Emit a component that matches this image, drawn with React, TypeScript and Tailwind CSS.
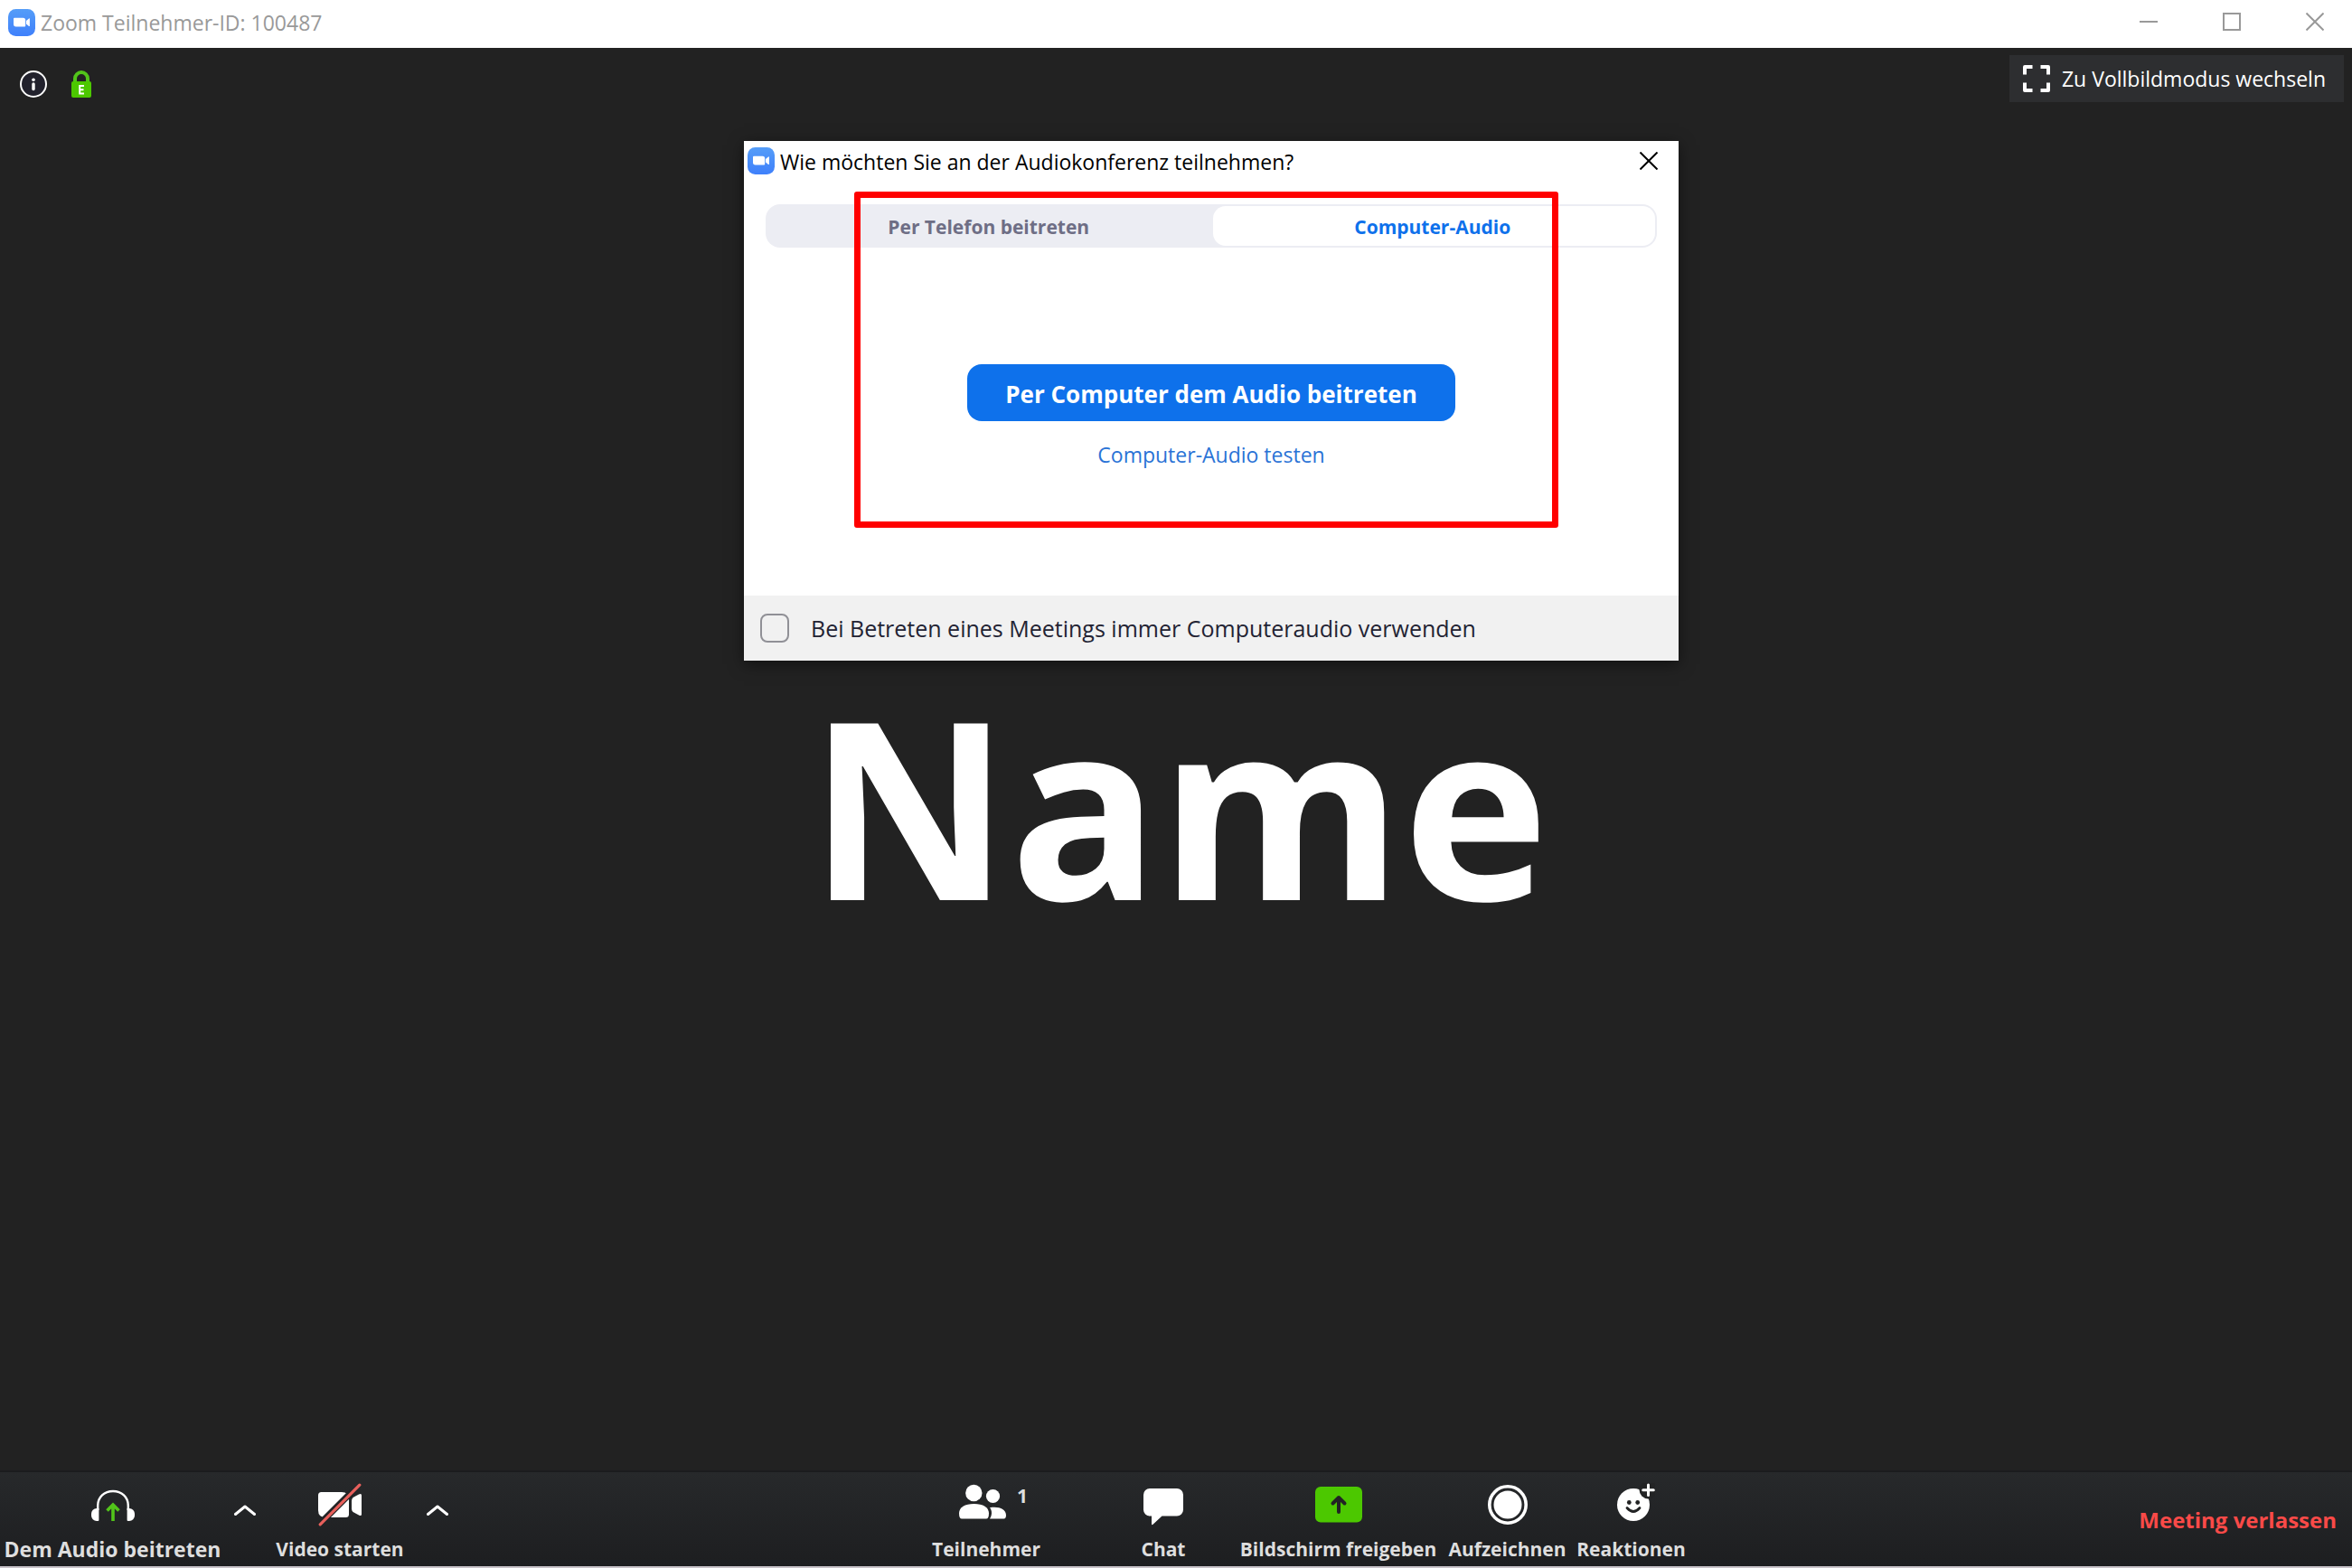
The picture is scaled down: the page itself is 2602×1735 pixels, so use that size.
import React, { useState } from "react";

function ZoomLogo() {
  return (
    <svg viewBox="0 0 30 30" className="size-[30px] shrink-0" aria-hidden="true">
      <defs>
        <linearGradient id="logo" x1="0" y1="0" x2="0" y2="1">
          <stop offset="0" stopColor="#559df8" />
          <stop offset="1" stopColor="#3f80fb" />
        </linearGradient>
      </defs>
      <rect width="30" height="30" rx="8.5" fill="url(#logo)" />
      <path d="M6 10.8q0-1 1-1h9.600q2.600 0 2.600 2.600v6q0 1-1 1H8.600q-2.600 0-2.600-2.600zM20 13l3-2.500q.900-.500.900.400v7.600q0 .900-.900.400l-3-2.500z" fill="#fff" />
    </svg>
  );
}

function InfoIcon() {
  return (
    <svg viewBox="0 0 30 30" className="size-[30px]" aria-hidden="true">
      <circle cx="15" cy="15" r="14" fill="#22222d" stroke="#fff" strokeWidth="2" />
      <circle cx="15" cy="10.200" r="1.800" fill="#fff" />
      <path d="M15 15v5.500" stroke="#fff" strokeWidth="3.400" strokeLinecap="round" />
    </svg>
  );
}

function LockIcon() {
  return (
    <svg viewBox="0 0 22 30" className="h-[30px] w-[22px]" aria-hidden="true">
      <path d="M4 13V9a7 7 0 0 1 14 0v4" fill="none" stroke="#52c41a" strokeWidth="4" />
      <rect y="12" width="22" height="18" rx="2" fill="#4cc800" />
      <path d="M14 17H9.200v8.500H14M9.200 21.200h4.300" fill="none" stroke="#fff" strokeWidth="2" />
    </svg>
  );
}

function FullscreenIcon() {
  return (
    <svg viewBox="0 0 30 30" className="size-[30px]" fill="none" stroke="#fff" strokeWidth="4" strokeLinejoin="round" aria-hidden="true">
      <path d="M2 10.500V2h8.500M19.500 2H28v8.500M28 19.500V28h-8.500M10.500 28H2v-8.500" />
    </svg>
  );
}

function Chevron() {
  return (
    <svg viewBox="0 0 24 12" className="h-3 w-6" fill="none" stroke="#fff" strokeWidth="3" strokeLinecap="round" strokeLinejoin="round" aria-hidden="true">
      <path d="M1.500 10.500L12 2l10.500 8.500" />
    </svg>
  );
}

function HeadphonesIcon() {
  return (
    <svg viewBox="0 0 48 48" className="size-12" aria-hidden="true">
      <path d="M7.200 30V25C7.200 15.500 14.500 9 24 9s16.800 6.500 16.800 16v5" fill="none" stroke="#fff" strokeWidth="2.400" />
      <path d="M8.400 28H6a6 6 0 0 0-6 6v2a6 6 0 0 0 6 6h1.400q1 0 1-1zM39.600 28H42a6 6 0 0 1 6 6v2a6 6 0 0 1-6 6h-1.400q-1 0-1-1z" fill="#fff" />
      <path d="M24 42V24M17.500 30.500L24 24l6.500 6.500" fill="none" stroke="#52c41a" strokeWidth="3.600" />
    </svg>
  );
}

function VideoOffIcon() {
  return (
    <svg viewBox="0 0 48 48" className="size-12" aria-hidden="true">
      <path d="M0 13.500Q0 10 3.500 10H26q8 0 8 8v16.500q0 3.500-3.500 3.500H8q-8 0-8-8z" fill="#fff" />
      <path d="M37 19.500Q37 17.500 38.500 16l6.500-3.600q3-1.400 3 1v21.200q0 2.400-3 1L38.500 32Q37 30.500 37 28.500z" fill="#fff" />
      <path d="M-1 48L37 10" stroke="#222324" strokeWidth="7" />
      <path d="M2.200 45.800L45.800 2.200" stroke="#e8605c" strokeWidth="3.200" strokeLinecap="round" />
    </svg>
  );
}

function PeopleIcon() {
  return (
    <svg viewBox="0 0 60 48" className="h-12 w-[60px]" fill="#fff" aria-hidden="true">
      <circle cx="16.300" cy="11" r="9.200" />
      <circle cx="37.500" cy="14.500" r="7.600" />
      <path d="M0 33.500C0 27 6.500 23 16.500 23S33 27 33 33.500c0 4-1 6-3 6H3c-2 0-3-2-3-6z" />
      <path d="M34 27.200C43.500 25.500 52 28.500 52 35.500c0 2.500-.800 4-2.500 4H34c2.600-4 2.800-9 0-12.300z" />
    </svg>
  );
}

function ChatIcon() {
  return (
    <svg viewBox="0 0 44 48" className="h-12 w-11" fill="#fff" aria-hidden="true">
      <path d="M7 6h30a7 7 0 0 1 7 7v16.500a7 7 0 0 1-7 7H20.500L10.500 45.800q-1.500 1.200-1.500-.800V36.500H7a7 7 0 0 1-7-7V13a7 7 0 0 1 7-7z" />
    </svg>
  );
}

function ShareIcon() {
  return (
    <svg viewBox="0 0 52 48" className="h-12 w-[52px]" aria-hidden="true">
      <rect y="4" width="52" height="39.500" rx="6" fill="#4cc800" />
      <path d="M26 32V16M19.500 22.500L26 16l6.500 6.500" fill="none" stroke="#222324" strokeWidth="4" strokeLinecap="round" strokeLinejoin="round" />
    </svg>
  );
}

function RecordIcon() {
  return (
    <svg viewBox="0 0 44 48" className="h-12 w-11" aria-hidden="true">
      <circle cx="22" cy="24" r="20.200" fill="none" stroke="#fff" strokeWidth="3.600" />
      <circle cx="22" cy="24" r="15.500" fill="#fff" />
    </svg>
  );
}

function ReactionIcon() {
  return (
    <svg viewBox="-10 0 52 48" className="h-12 w-[52px]" aria-hidden="true">
      <circle cx="18" cy="24" r="18" fill="#fff" />
      <circle cx="34.500" cy="7.500" r="10" fill="#232425" />
      <path d="M34.500 2v11.500M28.700 7.700h11.600" stroke="#fff" strokeWidth="3" strokeLinecap="round" />
      <circle cx="13.300" cy="21.500" r="2.400" fill="#222324" />
      <circle cx="22.700" cy="21.500" r="2.400" fill="#222324" />
      <path d="M11 27.500q7 8 14 0" fill="none" stroke="#222324" strokeWidth="2.800" strokeLinecap="round" />
    </svg>
  );
}

function CloseIcon() {
  return (
    <svg viewBox="0 0 20 20" className="size-5" fill="none" stroke="currentColor" strokeWidth="2" aria-hidden="true">
      <path d="M.500.500l19 19M19.500.500l-19 19" />
    </svg>
  );
}

function ToolButton({ label, width, large, badge, children }: {
  label: string;
  width: string;
  large?: boolean;
  badge?: string;
  children: React.ReactNode;
}) {
  return (
    <button type="button" className={`flex flex-col items-center gap-[13px] whitespace-nowrap font-bold text-[#dedede] ${width}`}>
      <span className="relative flex">
        {children}
        {badge && <span className="absolute top-0 left-[64px] text-[21px] leading-7">{badge}</span>}
      </span>
      <span className={large ? "text-[23px] leading-6" : "text-[21px] leading-6"}>{label}</span>
    </button>
  );
}

function TitleBar() {
  return (
    <header className="flex h-[53px] shrink-0 items-center justify-between bg-white text-[#999]">
      <div className="flex items-center gap-[6px] pb-1 pl-[9px]">
        <ZoomLogo />
        <h1 className="text-[23px] leading-8">Zoom Teilnehmer-ID: 100487</h1>
      </div>
      <div className="flex gap-[72px] pr-[31px] pb-[5px]">
        <button type="button" aria-label="Minimieren" className="flex size-5 items-center">
          <span className="h-[2px] w-5 bg-[#999]" />
        </button>
        <button type="button" aria-label="Maximieren" className="size-5 border-2 border-[#999]" />
        <button type="button" aria-label="Schließen" className="size-5"><CloseIcon /></button>
      </div>
    </header>
  );
}

function AudioDialog() {
  const [tab, setTab] = useState("computer");
  const tabs = [
    { id: "phone", label: "Per Telefon beitreten" },
    { id: "computer", label: "Computer-Audio" },
  ];
  return (
    <section role="dialog" aria-labelledby="dialog-title" className="absolute top-[103px] left-[calc(50%-478px)] w-[1034px] bg-white shadow-[0_4px_16px_rgba(0,0,0,0.5)]">
      <div className="flex h-11 items-center pr-[23px] pl-1">
        <ZoomLogo />
        <h2 id="dialog-title" className="ml-[6px] flex-1 pt-[2px] text-[23px] leading-8 text-black">Wie möchten Sie an der Audiokonferenz teilnehmen?</h2>
        <button type="button" aria-label="Schließen" className="text-black"><CloseIcon /></button>
      </div>
      <div role="tablist" className="mx-6 mt-[26px] grid h-12 grid-cols-[101fr_100fr] rounded-[16px] bg-[#ecedf3] p-[2px]">
        {tabs.map((t) => (
          <button
            key={t.id}
            type="button"
            role="tab"
            aria-selected={tab === t.id}
            onClick={() => setTab(t.id)}
            className={`rounded-[14px] pt-[2px] pr-1 text-[21px] leading-7 font-bold ${tab === t.id ? "bg-white text-[#0e71eb]" : "text-[#6e6e85]"}`}
          >
            {t.label}
          </button>
        ))}
      </div>
      <div className="flex flex-col items-center gap-[21px] pt-[129px] pb-[140px]">
        <button type="button" className="h-[63px] rounded-[16px] bg-[#0e71eb] px-[42px] pt-[2px] text-[26px] leading-8 font-bold whitespace-nowrap text-white">
          Per Computer dem Audio beitreten
        </button>
        <a href="#test" className="text-[23px] leading-8 text-[#2a73d6]">Computer-Audio testen</a>
      </div>
      <label className="flex h-[72px] items-center gap-6 bg-[#f1f1f1] pl-[18px] text-[25px] leading-8 text-[#232333]">
        <input type="checkbox" className="size-8 appearance-none rounded-[8px] border-2 border-[#909096] checked:bg-[#0e71eb]" />
        Bei Betreten eines Meetings immer Computeraudio verwenden
      </label>
      <div className="pointer-events-none absolute top-14 left-[122px] h-[372px] w-[779px] rounded-[3px] border-[7px] border-[#f00]" />
    </section>
  );
}

export default function App() {
  return (
    <div className="flex min-h-screen flex-col bg-[#222] font-['Open_Sans','Noto_Sans',sans-serif]">
      <TitleBar />
      <main className="relative flex flex-1 flex-col">
        <div className="flex items-start justify-between pt-2 pr-[9px] pl-[22px]">
          <div className="flex gap-[27px] pt-[17px]">
            <button type="button" aria-label="Informationen"><InfoIcon /></button>
            <button type="button" aria-label="Verschlüsselung"><LockIcon /></button>
          </div>
          <button type="button" className="flex h-[52px] items-center gap-[13px] bg-[#2d2e30] pr-5 pl-[15px] text-[23px] leading-8 text-white">
            <FullscreenIcon />
            Zu Vollbildmodus wechseln
          </button>
        </div>
        <div className="flex flex-1 items-center justify-center pt-10 pl-[6px]">
          <p className="text-[274px] leading-none font-bold text-white">Name</p>
        </div>
        <AudioDialog />
      </main>
      <footer className="flex items-stretch justify-between border-t-2 border-b-2 border-t-[#1b1c1e] border-b-[#c9c3c9] bg-linear-to-b from-[#27292b] to-[#1d1e20] pt-3 pb-[7px]">
        <div className="flex">
          <ToolButton label="Dem Audio beitreten" width="w-[249px]" large><HeadphonesIcon /></ToolButton>
          <button type="button" aria-label="Audiooptionen" className="flex w-11 justify-center pt-6"><Chevron /></button>
          <ToolButton label="Video starten" width="w-[166px]"><VideoOffIcon /></ToolButton>
          <button type="button" aria-label="Videooptionen" className="flex w-[49px] justify-center pt-6"><Chevron /></button>
        </div>
        <div className="flex">
          <ToolButton label="Teilnehmer" width="w-[228px]" badge="1"><PeopleIcon /></ToolButton>
          <ToolButton label="Chat" width="w-[164px]"><ChatIcon /></ToolButton>
          <ToolButton label="Bildschirm freigeben" width="w-[223px]"><ShareIcon /></ToolButton>
          <ToolButton label="Aufzeichnen" width="w-[151px]"><RecordIcon /></ToolButton>
          <ToolButton label="Reaktionen" width="w-[123px]"><ReactionIcon /></ToolButton>
        </div>
        <button type="button" className="w-[267px] pr-[17px] pb-1 text-right text-[24px] leading-8 font-bold whitespace-nowrap text-[#fa4a48]">
          Meeting verlassen
        </button>
      </footer>
    </div>
  );
}
